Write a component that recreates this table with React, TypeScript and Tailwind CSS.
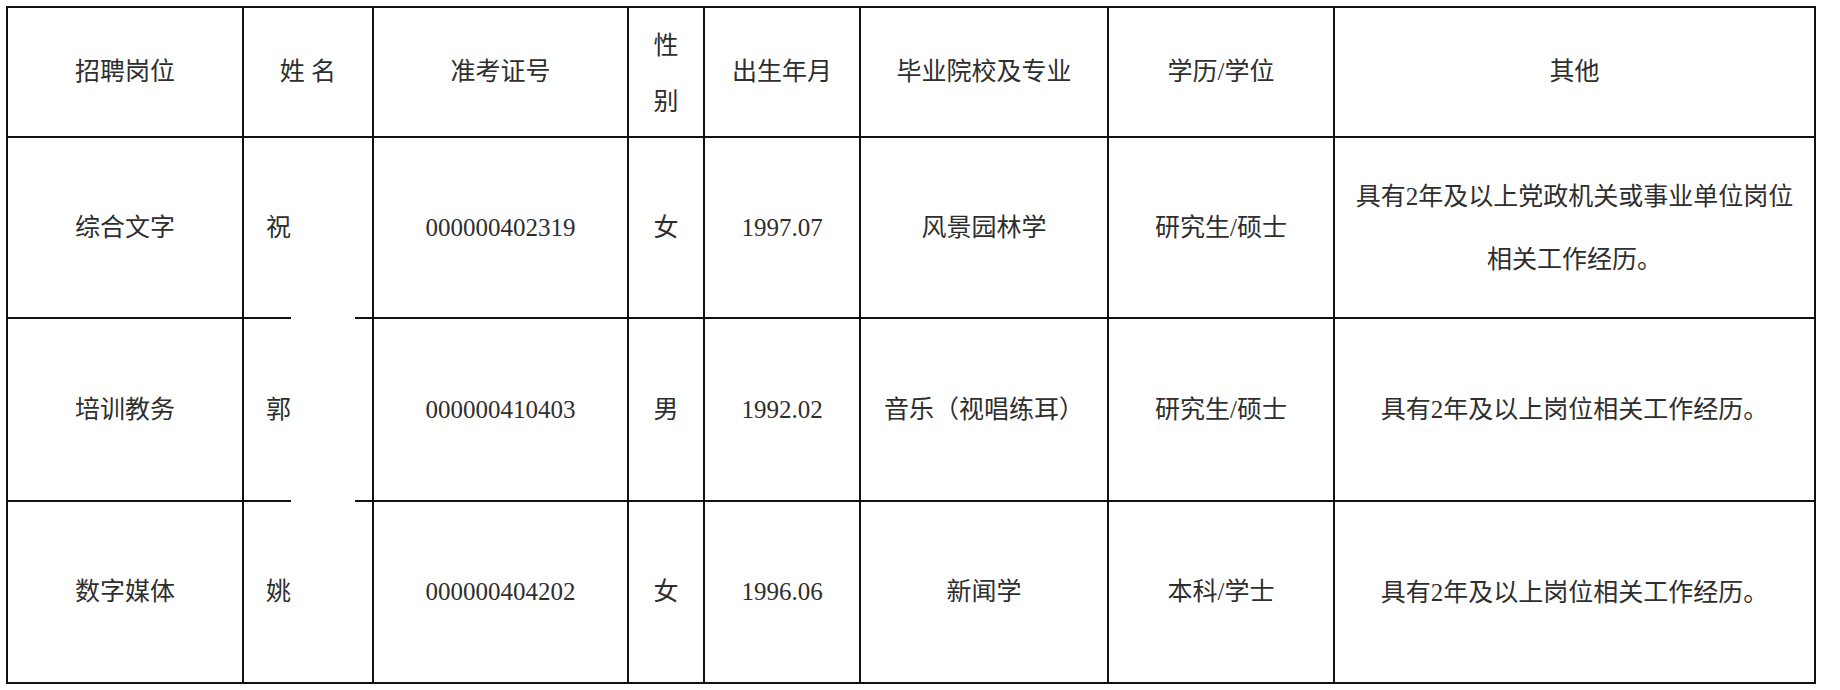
const rows = [
  {
    post: '综合文字',
    surname: '祝',
    examNo: '000000402319',
    sex: '女',
    birth: '1997.07',
    major: '风景园林学',
    degree: '研究生/硕士',
    other: ['具有2年及以上党政机关或事业单位岗位', '相关工作经历。'],
    h: 'h-[181px]',
  },
  {
    post: '培训教务',
    surname: '郭',
    examNo: '000000410403',
    sex: '男',
    birth: '1992.02',
    major: '音乐（视唱练耳）',
    degree: '研究生/硕士',
    other: ['具有2年及以上岗位相关工作经历。'],
    h: 'h-[183px]',
  },
  {
    post: '数字媒体',
    surname: '姚',
    examNo: '000000404202',
    sex: '女',
    birth: '1996.06',
    major: '新闻学',
    degree: '本科/学士',
    other: ['具有2年及以上岗位相关工作经历。'],
    h: 'h-[182px]',
  },
];

const cell = 'border-2 border-[#111] text-center align-middle p-0';

export default function App() {
  return (
    <div
      className="w-[1840px] h-[690px] bg-white pl-[6px] pt-[6px] text-[25px] text-[#2e2e2e]"
      style={{ fontFamily: '"Liberation Serif", "Noto Sans CJK SC", serif' }}
    >
      <div className="relative w-[1810px]">
        <table className="table-fixed border-collapse w-[1810px]">
          <colgroup>
            <col className="w-[236px]" />
            <col className="w-[130px]" />
            <col className="w-[255px]" />
            <col className="w-[76px]" />
            <col className="w-[156px]" />
            <col className="w-[248px]" />
            <col className="w-[226px]" />
            <col className="w-[481px]" />
          </colgroup>
          <thead>
            <tr className="h-[130px]">
              <th className={`${cell} font-normal`}>招聘岗位</th>
              <th className={`${cell} font-normal`}>姓&nbsp;名</th>
              <th className={`${cell} font-normal`}>准考证号</th>
              <th className={`${cell} font-normal`}>
                <div className="leading-[56px] pt-[4px]">
                  性<br />别
                </div>
              </th>
              <th className={`${cell} font-normal`}>出生年月</th>
              <th className={`${cell} font-normal`}>毕业院校及专业</th>
              <th className={`${cell} font-normal`}>学历/学位</th>
              <th className={`${cell} font-normal`}>其他</th>
            </tr>
          </thead>
          <tbody>
            {rows.map((r) => (
              <tr key={r.examNo} className={r.h}>
                <td className={cell}>{r.post}</td>
                <td className={`${cell} text-left pl-[22px]`}>{r.surname}</td>
                <td className={cell}>{r.examNo}</td>
                <td className={cell}>{r.sex}</td>
                <td className={cell}>{r.birth}</td>
                <td className={cell}>{r.major}</td>
                <td className={cell}>{r.degree}</td>
                <td className={cell}>
                  <div className="leading-[63px]">
                    {r.other.map((line, i) => (
                      <div key={i}>{line}</div>
                    ))}
                  </div>
                </td>
              </tr>
            ))}
          </tbody>
        </table>
        {/* redaction patch over the given names */}
        <div className="absolute left-[285px] top-[133px] w-[64px] h-[541px] bg-white" />
      </div>
    </div>
  );
}
